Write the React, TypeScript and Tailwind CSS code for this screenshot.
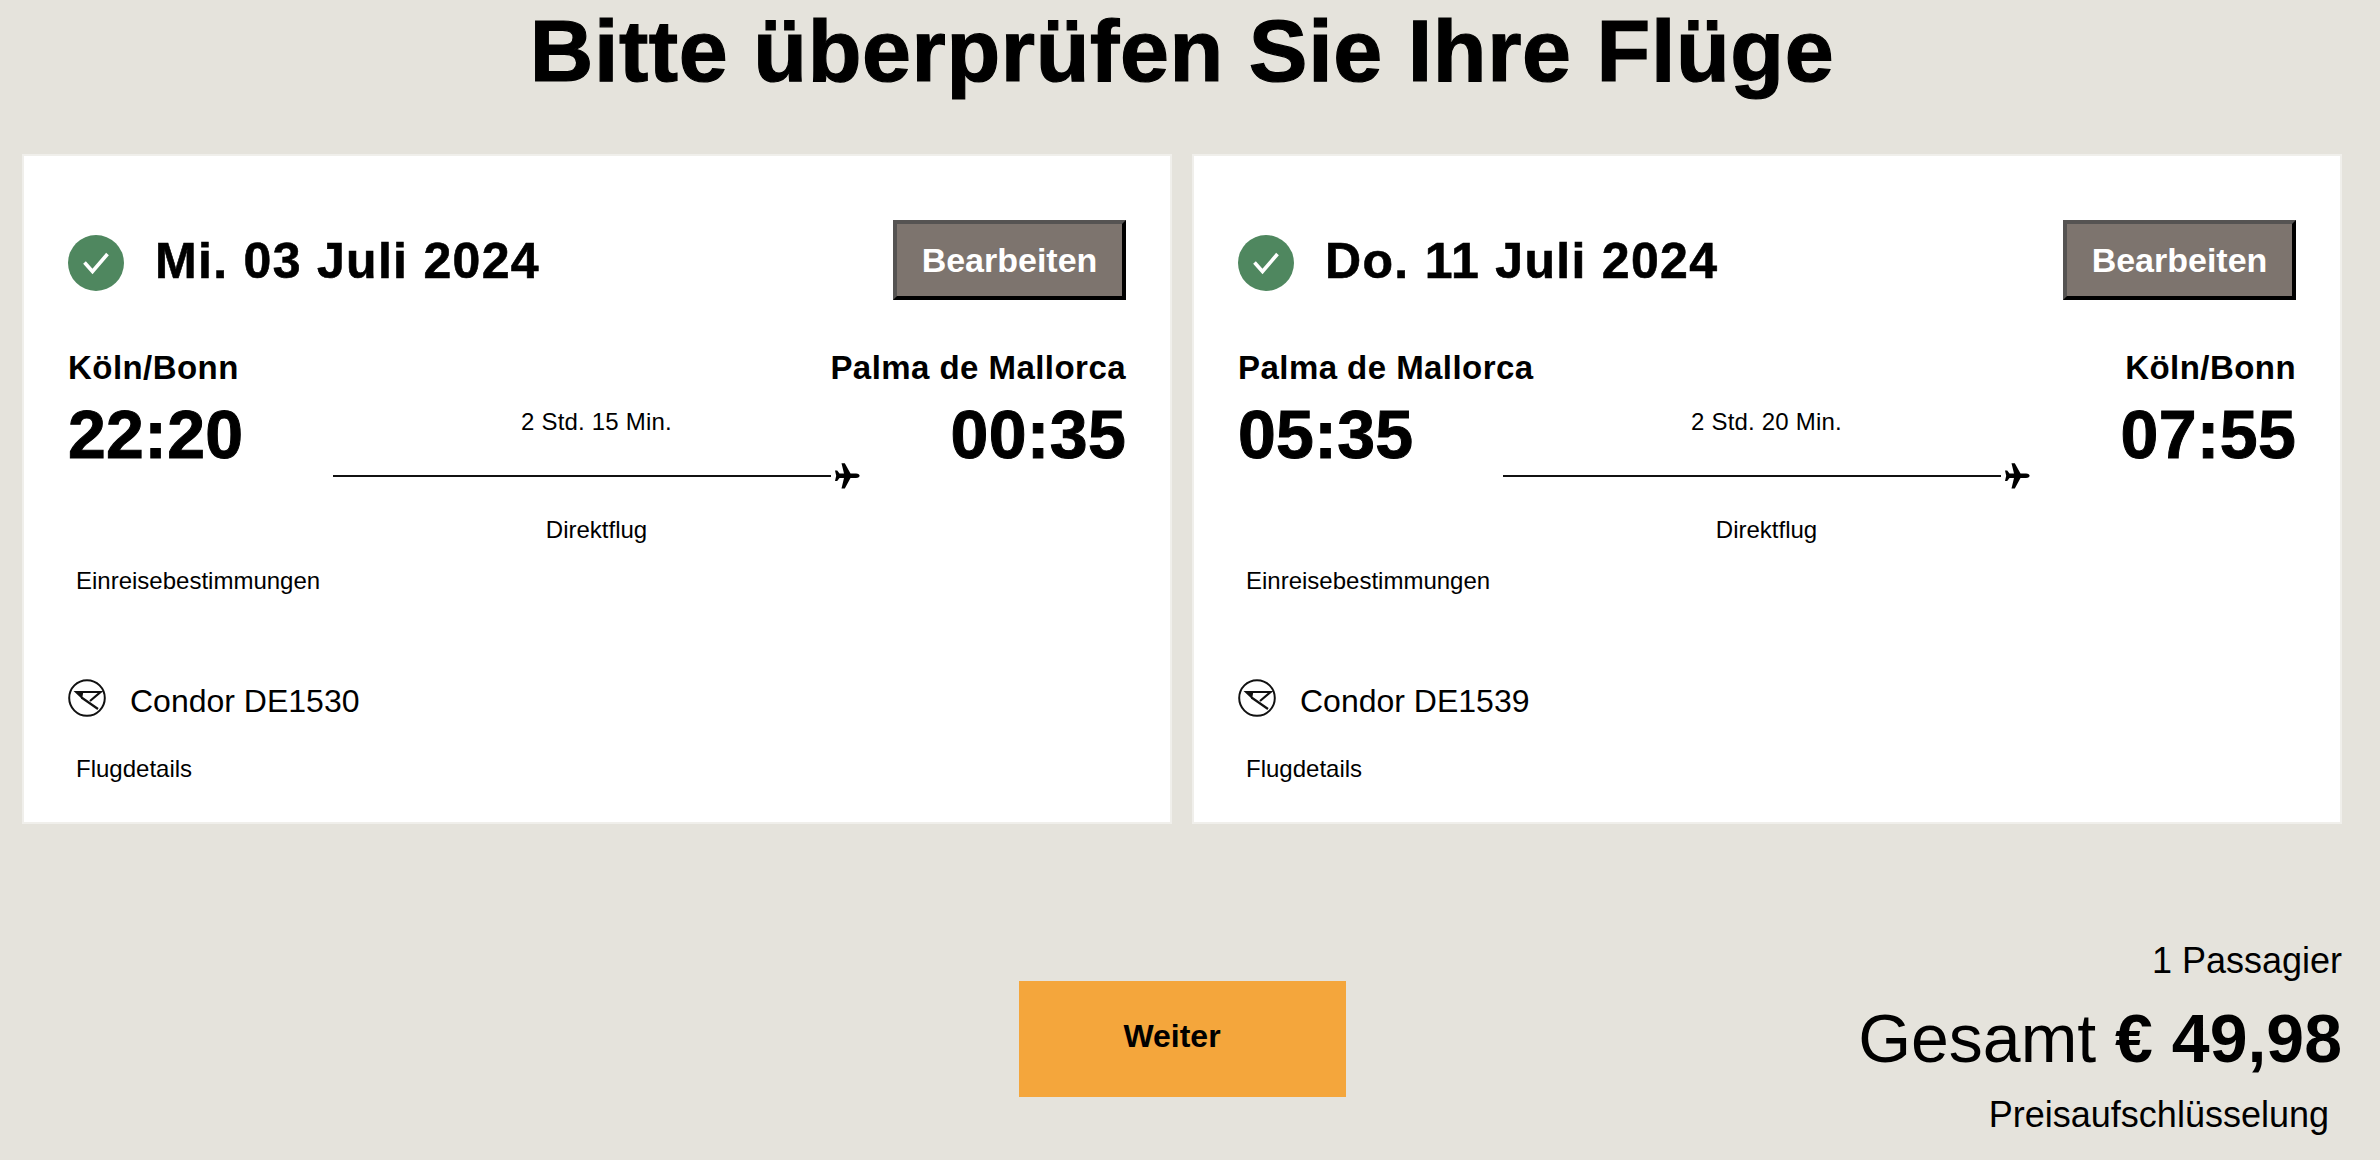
const flights = [
  {
    date: "Mi. 03 Juli 2024",
    from: "Köln/Bonn",
    to: "Palma de Mallorca",
    dep: "22:20",
    arr: "00:35",
    duration: "2 Std. 15 Min.",
    flight: "Condor DE1530",
  },
  {
    date: "Do. 11 Juli 2024",
    from: "Palma de Mallorca",
    to: "Köln/Bonn",
    dep: "05:35",
    arr: "07:55",
    duration: "2 Std. 20 Min.",
    flight: "Condor DE1539",
  },
];

function CheckBadge() {
  return (
    <svg width="56" height="56" viewBox="0 0 56 56" className="mt-[6px] shrink-0">
      <circle cx="28" cy="28" r="28" fill="#4f875f" />
      <path d="M16.5 27.5 L24.5 36.5 L39.5 19" fill="none" stroke="#fff" strokeWidth="3.6" />
    </svg>
  );
}

function PlaneIcon() {
  return (
    <svg width="26" height="26" viewBox="0 0 26 26" className="ml-[3px] shrink-0">
      <path
        d="M1 7.5 L3.2 7.5 L5.5 10.6 L10 10.6 L7.5 0.3 L10.8 0.3 L16.5 10.6 L22 10.6 C24.5 10.6 25.6 12 25.6 12.8 C25.6 13.6 24.5 15 22 15 L16.5 15 L10.8 25.5 L7.5 25.5 L10 15 L5.5 15 L3.2 18 L1 18 L2.2 12.8 Z"
        fill="#000"
      />
    </svg>
  );
}

function CondorLogo() {
  return (
    <svg width="38" height="38" viewBox="0 0 38 38" className="shrink-0">
      <circle cx="19" cy="19" r="17.8" fill="none" stroke="#111" strokeWidth="2" />
      <path d="M5.5 12 H15.5 L14 20 Z" fill="#111" />
      <path d="M15 13 H32.5 L22 22 M13.5 18.5 L30 30" fill="none" stroke="#111" strokeWidth="2.2" />
    </svg>
  );
}

function FlightCard({ item }: { item: (typeof flights)[number] }) {
  return (
    <section className="h-[670px] flex-1 border-2 border-[#f0efeb] bg-white px-[44px] pt-[64px]">
      <div className="flex items-center justify-between">
        <div className="flex items-center gap-[31px]">
          <CheckBadge />
          <h2 className="mt-[2px] text-[50px] leading-[56px] font-bold tracking-[1.3px] [-webkit-text-stroke:0.6px_black]">
            {item.date}
          </h2>
        </div>
        <button className="h-[80px] w-[233px] border-4 border-t-[#555352] border-r-black border-b-black border-l-[#555352] bg-[#7d746e] text-[34px] font-bold text-white">
          Bearbeiten
        </button>
      </div>

      <div className="mt-[49px] flex justify-between text-[33px] leading-[37px] font-bold tracking-[0.45px]">
        <span>{item.from}</span>
        <span>{item.to}</span>
      </div>

      <div className="mt-[11px] grid grid-cols-[265px_527px_1fr]">
        <div className="text-[68px] leading-[74px] font-bold tracking-[0.3px] [-webkit-text-stroke:1px_black]">
          {item.dep}
        </div>
        <div className="flex flex-col items-center pt-[11px]">
          <div className="text-[24px] leading-[28px] tracking-[0.2px]">{item.duration}</div>
          <div className="mt-[27px] flex w-full items-center">
            <div className="h-[2px] flex-1 bg-[#111]" />
            <PlaneIcon />
          </div>
          <div className="mt-[27px] text-[24px] leading-[28px]">Direktflug</div>
        </div>
        <div className="text-right text-[68px] leading-[74px] font-bold tracking-[0.3px] [-webkit-text-stroke:1px_black]">
          {item.arr}
        </div>
      </div>

      <div className="mt-[23px] pl-[8px] text-[24px] leading-[28px]">Einreisebestimmungen</div>

      <div className="mt-[84px] flex items-start gap-[24px]">
        <CondorLogo />
        <span className="mt-[4px] text-[32px] leading-[37px]">{item.flight}</span>
      </div>

      <div className="mt-[35px] pl-[8px] text-[24px] leading-[28px]">Flugdetails</div>
    </section>
  );
}

export default function App() {
  return (
    <main className="min-h-[1160px] overflow-hidden bg-[#e5e3dc] pr-[38px] pl-[22px] font-['Liberation_Sans',Arial,sans-serif] text-black">
      <h1 className="pt-[3px] text-center text-[88px] leading-[96px] font-bold tracking-[0.6px] [-webkit-text-stroke:1.2px_black]">
        Bitte überprüfen Sie Ihre Flüge
      </h1>

      <div className="mt-[55px] flex gap-[20px]">
        {flights.map((item) => (
          <FlightCard key={item.date} item={item} />
        ))}
      </div>

      <div className="mt-[113px] grid grid-cols-[1fr_327px_1fr]">
        <div />
        <button className="mt-[44px] h-[116px] bg-[#f4a63c] pr-[20px] pb-[6px] text-[32px] font-bold">
          Weiter
        </button>
        <div className="text-right">
          <div className="mt-[3px] text-[36px] leading-[41px]">1 Passagier</div>
          <div className="mt-[18px] text-[68px] leading-[78px]">
            Gesamt <span className="font-bold">€ 49,98</span>
          </div>
          <div className="mt-[17px] pr-[13px] text-[36px] leading-[41px]">Preisaufschlüsselung</div>
        </div>
      </div>
    </main>
  );
}
